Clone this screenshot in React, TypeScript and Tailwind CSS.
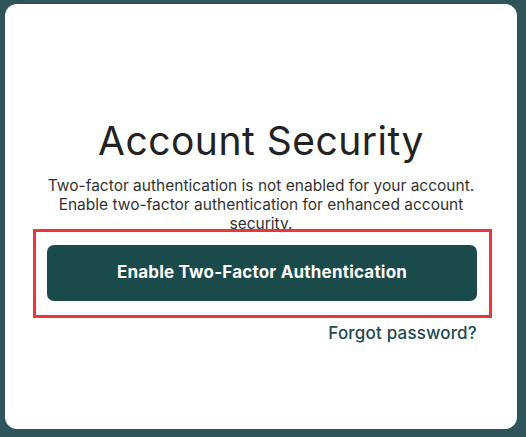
export default function App() {
  return (
    <div className="w-[526px] h-[437px] bg-[#2f5459] pl-[5px] pr-[9px] pt-[4px] pb-[8px]" style={{ fontFamily: "Inter, 'Noto Sans', sans-serif" }}>
      <div className="w-full h-full bg-white rounded-[12px] flex flex-col items-center pt-[113px]">
        <h1 className="text-[39px] leading-[48px] text-[#222] font-normal tracking-[0.5px]">Account Security</h1>
        <p className="mt-[11px] w-[450px] text-center text-[15.5px] leading-[19px] text-[#333]">
          Two-factor authentication is not enabled for your account. Enable two-factor authentication for enhanced account security.
        </p>
        <div className="-mt-[4px] self-start ml-[28px] w-[459px] h-[89px] border-[3px] border-[#e8383d] px-[11px] pt-[13px]">
          <button className="w-[430px] h-[56px] rounded-[7px] bg-[#1b4a4a] text-white text-[17px] font-bold tracking-[0.2px]">
            Enable Two-Factor Authentication
          </button>
        </div>
        <div className="self-end mr-[40px] mt-[4px] text-[17px] leading-[22px] text-[#22494d] font-medium tracking-[0.2px]">Forgot password?</div>
      </div>
    </div>
  );
}
